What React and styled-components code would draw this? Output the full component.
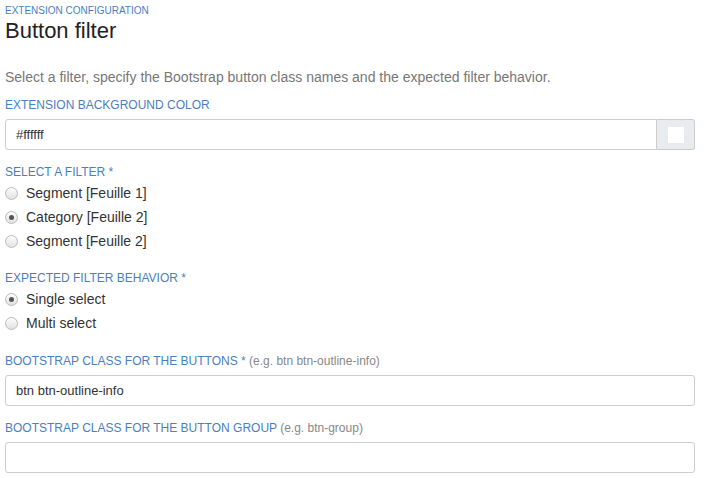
import React, { useState } from 'react';
import styled, { createGlobalStyle } from 'styled-components';

const GlobalStyle = createGlobalStyle`
  body {
    margin: 0;
    background: #fff;
    font-family: "Liberation Sans", Arial, sans-serif;
    color: #333;
  }
`;

const Page = styled.div`
  padding: 4px 11px 0 5px;
`;

const Kicker = styled.div`
  font-size: 10px;
  color: #4a7fc1;
  line-height: 14px;
`;

const Title = styled.h1`
  margin: 0;
  font-size: 22px;
  font-weight: 400;
  color: #222;
  line-height: 26px;
`;

const Intro = styled.p`
  margin: 23px 0 0;
  font-size: 14px;
  color: #777;
  line-height: 20px;
`;

const Field = styled.div`
  margin-top: ${p => p.$gap || 10}px;
`;

const Label = styled.div`
  font-size: 12px;
  color: #4a7fc1;
  text-transform: uppercase;
  line-height: 16px;
  margin-bottom: ${p => (p.$tight ? 1 : 6)}px;
`;

const Hint = styled.span`
  text-transform: none;
  color: #888;
`;

const InputGroup = styled.div`
  display: flex;
  height: 31px;
`;

const TextInput = styled.input`
  display: block;
  flex: 1;
  width: 100%;
  min-width: 0;
  box-sizing: border-box;
  height: 31px;
  border: 1px solid #ccc;
  border-radius: ${p => (p.$joined ? '3px 0 0 3px' : '3px')};
  padding: 0 10px;
  font-family: inherit;
  font-size: 13px;
  color: #333;
  outline: none;
`;

const Addon = styled.div`
  width: 38px;
  flex: none;
  box-sizing: border-box;
  border: 1px solid #ccc;
  border-left: none;
  border-radius: 0 3px 3px 0;
  background: #e9ecef;
  display: flex;
  align-items: center;
  justify-content: center;
`;

const Swatch = styled.div`
  width: 16px;
  height: 16px;
  background: ${p => p.$color};
`;

const RadioList = styled.div`
  display: flex;
  flex-direction: column;
`;

const RadioRow = styled.label`
  display: flex;
  align-items: center;
  height: 24px;
  font-size: 14px;
  color: #333;
  cursor: pointer;
`;

const RadioDot = styled.span`
  width: 13px;
  height: 13px;
  box-sizing: border-box;
  border-radius: 50%;
  border: 1px solid #bbb;
  background: linear-gradient(#fdfdfd, #e2e2e2);
  margin-right: 8px;
  display: flex;
  align-items: center;
  justify-content: center;
  &::after {
    content: '';
    width: 5px;
    height: 5px;
    border-radius: 50%;
    background: ${p => (p.$checked ? '#555' : 'transparent')};
  }
`;

const Radio = ({ label, checked, onSelect }) => (
  <RadioRow onClick={onSelect}>
    <RadioDot $checked={checked} />
    {label}
  </RadioRow>
);

const filters = ['Segment [Feuille 1]', 'Category [Feuille 2]', 'Segment [Feuille 2]'];
const behaviors = ['Single select', 'Multi select'];

const App = () => {
  const [filter, setFilter] = useState(1);
  const [behavior, setBehavior] = useState(0);
  return (
    <Page>
      <GlobalStyle />
      <Kicker>EXTENSION CONFIGURATION</Kicker>
      <Title>Button filter</Title>
      <Intro>
        Select a filter, specify the Bootstrap button class names and the expected filter behavior.
      </Intro>
      <Field $gap={10}>
        <Label>Extension background color</Label>
        <InputGroup>
          <TextInput $joined defaultValue="#ffffff" />
          <Addon>
            <Swatch $color="#ffffff" />
          </Addon>
        </InputGroup>
      </Field>
      <Field $gap={14}>
        <Label $tight>Select a filter *</Label>
        <RadioList>
          {filters.map((f, i) => (
            <Radio key={i} label={f} checked={filter === i} onSelect={() => setFilter(i)} />
          ))}
        </RadioList>
      </Field>
      <Field $gap={17}>
        <Label $tight>Expected filter behavior *</Label>
        <RadioList>
          {behaviors.map((b, i) => (
            <Radio key={i} label={b} checked={behavior === i} onSelect={() => setBehavior(i)} />
          ))}
        </RadioList>
      </Field>
      <Field $gap={18}>
        <Label>
          Bootstrap class for the buttons * <Hint>(e.g. btn btn-outline-info)</Hint>
        </Label>
        <TextInput defaultValue="btn btn-outline-info" />
      </Field>
      <Field $gap={14}>
        <Label>
          Bootstrap class for the button group <Hint>(e.g. btn-group)</Hint>
        </Label>
        <TextInput />
      </Field>
    </Page>
  );
};

export default App;
